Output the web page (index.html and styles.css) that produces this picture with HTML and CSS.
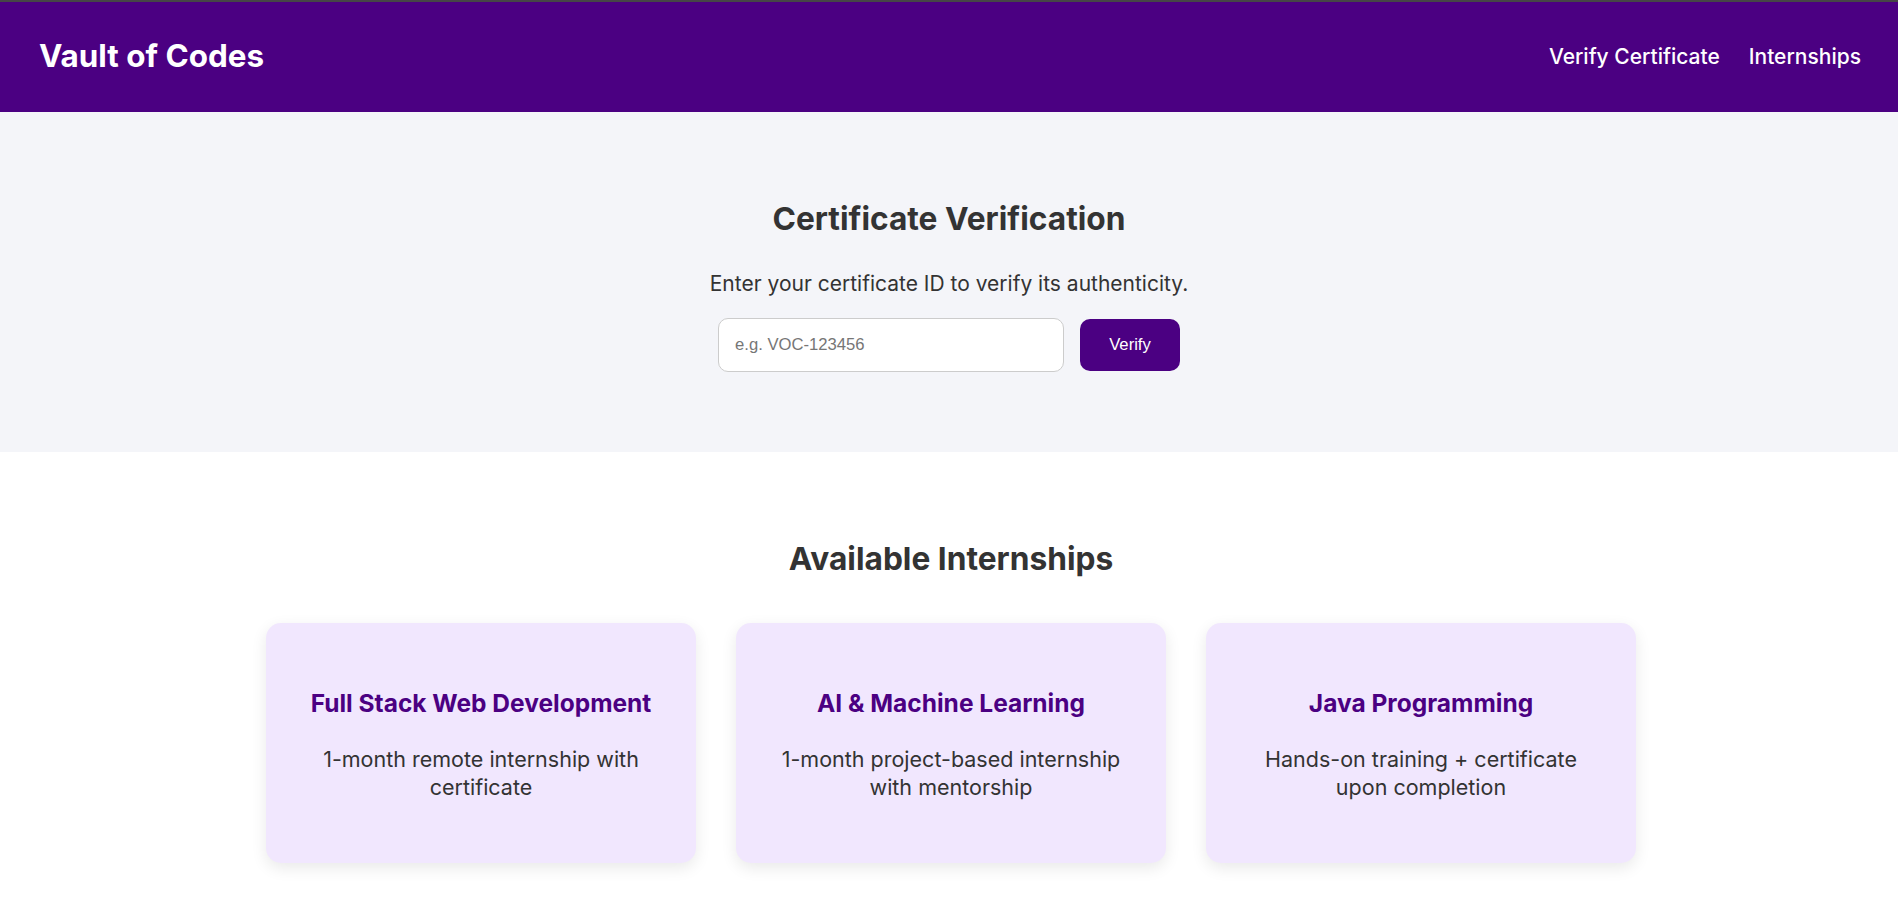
FILE: index.html
```html
<!DOCTYPE html>
<html lang="en">
<head>
<meta charset="utf-8">
<title>Vault of Codes</title>
<link rel="stylesheet" href="styles.css">
</head>
<body>
<header class="site-header">
  <div class="logo">Vault of Codes</div>
  <nav class="nav">
    <a href="#verify" class="nav-link">Verify Certificate</a>
    <a href="#internships" class="nav-link">Internships</a>
  </nav>
</header>
<main>
  <section class="hero" id="verify">
    <h2 class="section-title">Certificate Verification</h2>
    <p class="hero-text">Enter your certificate ID to verify its authenticity.</p>
    <form class="verify-form">
      <input class="verify-input" type="text" placeholder="e.g. VOC-123456">
      <button class="verify-btn" type="button">Verify</button>
    </form>
  </section>
  <section class="internships" id="internships">
    <h2 class="section-title">Available Internships</h2>
    <div class="cards">
      <div class="card">
        <h3 class="card-title">Full Stack Web Development</h3>
        <p class="card-text">1-month remote internship with certificate</p>
      </div>
      <div class="card">
        <h3 class="card-title">AI &amp; Machine Learning</h3>
        <p class="card-text">1-month project-based internship with mentorship</p>
      </div>
      <div class="card">
        <h3 class="card-title">Java Programming</h3>
        <p class="card-text">Hands-on training + certificate upon completion</p>
      </div>
    </div>
  </section>
</main>
</body>
</html>
```
FILE: styles.css
```css
* { box-sizing: border-box; }
html, body { margin: 0; padding: 0; }
body {
  font-family: "Inter", "Noto Sans", sans-serif;
  color: #333;
  background: #fff;
}
.site-header {
  height: 112px;
  border-top: 2px solid #464646;
  background: #4b0082;
  display: flex;
  align-items: center;
  justify-content: space-between;
  padding: 0 37px 0 39px;
}
.logo {
  color: #fff;
  font-size: 31.4px;
  font-weight: 700;
  line-height: 1.2;
}
.nav { display: flex; gap: 29px; }
.nav-link {
  color: #fff;
  text-decoration: none;
  font-size: 21px;
  font-weight: 500;
  line-height: 1.3;
}
.hero {
  background: #f4f5f9;
  padding: 88px 20px 80px;
  text-align: center;
}
.section-title {
  margin: 0;
  font-size: 31.7px;
  font-weight: 700;
  line-height: 38px;
  color: #333;
}
.hero-text {
  margin: 30px 0 18px;
  font-size: 21px;
  line-height: 31.5px;
}
.verify-form {
  display: flex;
  justify-content: center;
  align-items: center;
  gap: 16px;
}
.verify-input {
  width: 346px;
  height: 54px;
  padding: 0 16px;
  border: 1px solid #ccc;
  border-radius: 10px;
  background: #fff;
  font-family: "Liberation Sans", Arial, sans-serif;
  font-size: 16.67px;
  color: #333;
}
.verify-input::placeholder { color: #767676; }
.verify-btn {
  width: 100px;
  height: 52px;
  border: none;
  border-radius: 10px;
  background: #4b0082;
  color: #fff;
  font-family: "Liberation Sans", Arial, sans-serif;
  font-size: 16.67px;
}
.internships {
  padding: 88px 18px 60px 22px;
  text-align: center;
}
.cards {
  margin: 45px auto 0;
  display: grid;
  grid-template-columns: repeat(3, 430px);
  gap: 40px;
  justify-content: center;
}
.card {
  background: #f1e7fe;
  border-radius: 15px;
  padding: 64px 38px 62px;
  box-shadow: 0 5px 16px rgba(0, 0, 0, 0.09);
}
.card-title {
  margin: 0;
  font-size: 24.5px;
  font-weight: 700;
  line-height: 32px;
  color: #4b0082;
}
.card-text {
  margin: 26px 0 0;
  font-size: 21.5px;
  line-height: 28.3px;
}
```
